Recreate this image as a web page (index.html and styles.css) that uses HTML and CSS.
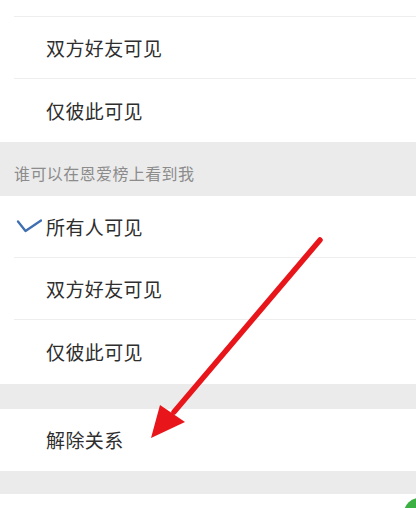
FILE: index.html
```html
<!DOCTYPE html>
<html lang="zh-CN">
<head>
<meta charset="utf-8">
<title>恩爱榜设置</title>
<link rel="stylesheet" href="styles.css">
</head>
<body>
<div class="page">
  <div class="group">
    <div class="row row-partial"></div>
    <div class="row"><span class="label">双方好友可见</span></div>
    <div class="row row-end1"><span class="label">仅彼此可见</span></div>
  </div>
  <div class="section-head">谁可以在恩爱榜上看到我</div>
  <div class="group">
    <div class="row">
      <svg class="check" viewBox="0 0 26 15" width="26" height="15"><polyline points="2,2.5 9.5,12 25,1.5" fill="none" stroke="#3f6fb2" stroke-width="2.3" stroke-linecap="round" stroke-linejoin="round"/></svg>
      <span class="label">所有人可见</span>
    </div>
    <div class="row"><span class="label">双方好友可见</span></div>
    <div class="row row-end2"><span class="label">仅彼此可见</span></div>
  </div>
  <div class="spacer spacer-a"></div>
  <div class="group">
    <div class="row row-single"><span class="label">解除关系</span></div>
  </div>
  <div class="spacer spacer-b"></div>
  <div class="tail"></div>

  <svg class="arrow" viewBox="0 0 416 508" width="416" height="508">
    <line x1="320" y1="240" x2="174" y2="412" stroke="#e8161b" stroke-width="5.5" stroke-linecap="round"/>
    <polygon points="160,405 185,422 151,438" fill="#e8161b"/>
  </svg>
  <div class="green"></div>
</div>
</body>
</html>
```
FILE: styles.css
```css
html, body {
  margin: 0;
  padding: 0;
  background: #ffffff;
}
.page {
  position: relative;
  width: 416px;
  height: 508px;
  overflow: hidden;
  font-family: "Noto Sans CJK SC", "Noto Sans", sans-serif;
  background: #ffffff;
}
.group {
  background: #ffffff;
  padding-left: 14px;
}
.row {
  box-sizing: border-box;
  height: 62px;
  display: flex;
  align-items: center;
  border-bottom: 1px solid #eeeeee;
  position: relative;
}
.row-partial {
  height: 17px;
}
.row-end1 {
  height: 63px;
  border-bottom: none;
}
.row-end2 {
  height: 64px;
  border-bottom: none;
}
.row-single {
  height: 62px;
  border-bottom: none;
}
.label {
  margin-left: 32px;
  margin-top: -1px;
  font-size: 19px;
  color: #2e2e2e;
  letter-spacing: 0.4px;
}
.check {
  position: absolute;
  left: 2px;
  top: 23px;
}
.section-head {
  box-sizing: border-box;
  height: 54px;
  background: #ebebeb;
  display: flex;
  align-items: flex-end;
  padding: 0 0 11px 14px;
  font-size: 16px;
  letter-spacing: 0.4px;
  color: #8c8c8c;
}
.spacer {
  background: #ebebeb;
}
.spacer-a {
  height: 25px;
}
.spacer-b {
  height: 23px;
}
.tail {
  height: 20px;
  background: #ffffff;
}
.arrow {
  position: absolute;
  left: 0;
  top: 0;
  pointer-events: none;
}
.green {
  position: absolute;
  left: 404px;
  top: 498px;
  width: 30px;
  height: 30px;
  border-radius: 50%;
  background: #3cb043;
}
```
